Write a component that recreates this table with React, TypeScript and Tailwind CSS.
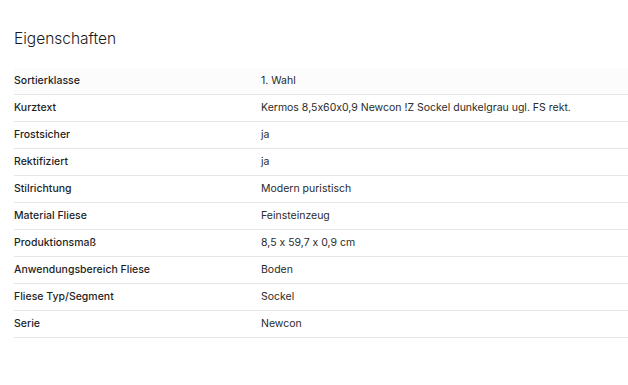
const rows = [
  { label: "Sortierklasse", value: "1. Wahl" },
  { label: "Kurztext", value: "Kermos 8,5x60x0,9 Newcon !Z Sockel dunkelgrau ugl. FS rekt." },
  { label: "Frostsicher", value: "ja" },
  { label: "Rektifiziert", value: "ja" },
  { label: "Stilrichtung", value: "Modern puristisch" },
  { label: "Material Fliese", value: "Feinsteinzeug" },
  { label: "Produktionsmaß", value: "8,5 x 59,7 x 0,9 cm" },
  { label: "Anwendungsbereich Fliese", value: "Boden" },
  { label: "Fliese Typ/Segment", value: "Sockel" },
  { label: "Serie", value: "Newcon" },
];

export default function App() {
  return (
    <div
      className="w-[628px] h-[385px] bg-white text-[#222] pl-[14px] pt-[28px] [font-feature-settings:'calt'_0]"
      style={{ fontFamily: "Inter, 'Liberation Sans', sans-serif" }}
    >
      <h2 className="text-[15.5px] font-light leading-[22px] text-[#1a1a1a]">
        Eigenschaften
      </h2>

      <div className="mt-[18px]">
        {rows.map((row, i) => (
          <div
            key={row.label}
            className={
              "flex items-center h-[27px] border-b border-[#e6e6e6] text-[10.5px] " +
              (i === 0 ? "bg-[#fcfcfc]" : "")
            }
          >
            <div className="w-[247px] font-medium text-[#1f1f1f]">{row.label}</div>
            <div className="flex-1 text-[#2a2a2a]">{row.value}</div>
          </div>
        ))}
      </div>
    </div>
  );
}
